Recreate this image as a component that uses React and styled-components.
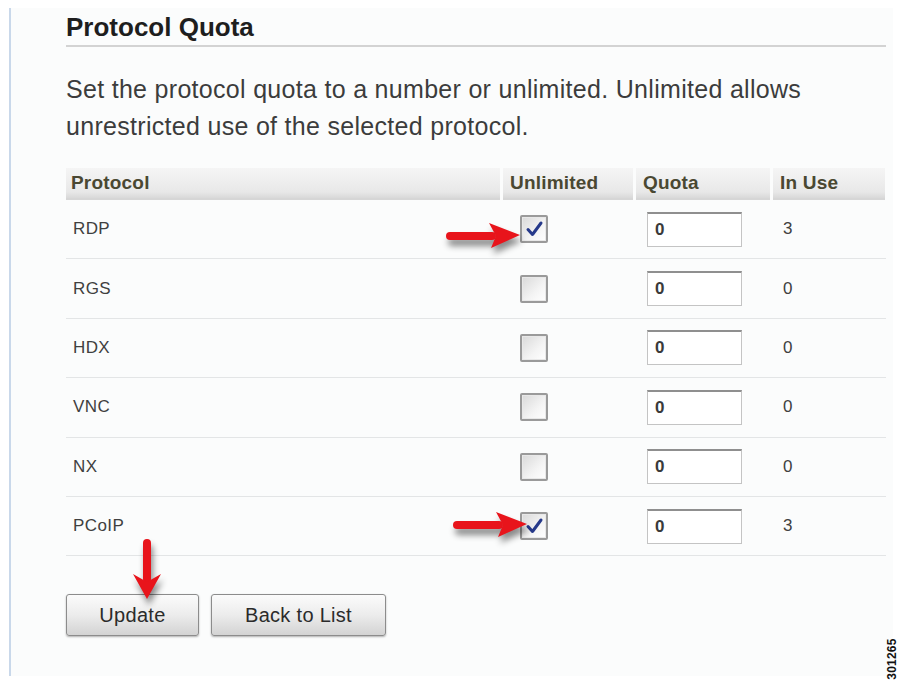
import React from "react";
import styled, { createGlobalStyle } from "styled-components";

const Global = createGlobalStyle`
  html, body { margin: 0; padding: 0; background: #ffffff; }
  body { font-family: "Liberation Sans", Arial, sans-serif; }
`;

const Page = styled.div`
  width: 900px;
  height: 689px;
  position: relative;
  overflow: hidden;
  padding-top: 8px;
  box-sizing: border-box;
`;

const Frame = styled.div`
  margin-left: 9px;
  width: 884px;
  height: 668px;
  box-sizing: border-box;
  border-left: 2px solid #c9d8ea;
  background: #fbfcfc;
  padding: 4px 0 0 55px;
  display: flex;
  flex-direction: column;
`;

const Content = styled.div`
  width: 820px;
  display: flex;
  flex-direction: column;
`;

const Title = styled.h2`
  margin: 0;
  font-size: 26px;
  line-height: 30px;
  font-weight: bold;
  color: #1e1e1e;
  padding-bottom: 3px;
  border-bottom: 2px solid #d3d3d3;
`;

const Description = styled.p`
  margin: 24px 0 0 0;
  font-size: 25px;
  line-height: 37px;
  letter-spacing: 0.3px;
  color: #3c3c3c;
`;

const Table = styled.div`
  margin-top: 23px;
  display: flex;
  flex-direction: column;
`;

const cols = "434px 130px 134px 112px";

const HeaderRow = styled.div`
  display: grid;
  grid-template-columns: ${cols};
  column-gap: 3px;
  height: 32px;
`;

const HeaderCell = styled.div`
  display: flex;
  align-items: center;
  padding-left: ${(p) => p.$pad || 6}px;
  background: linear-gradient(#f5f5f5, #e8e8e8 80%, #d9d9d9);
  border-bottom: 2px solid #d6d6d6;
  font-size: 19px;
  font-weight: bold;
  letter-spacing: 0.2px;
  color: #4a4832;
`;

const Row = styled.div`
  display: grid;
  grid-template-columns: ${cols};
  column-gap: 3px;
  height: 59.4px;
  box-sizing: border-box;
  border-bottom: 1px solid #e3e5e6;
`;

const Cell = styled.div`
  position: relative;
  display: flex;
  align-items: center;
  padding-left: ${(p) => p.$pad || 0}px;
  font-size: 17px;
  letter-spacing: 0.4px;
  color: #404040;
`;

const Box = styled.span`
  width: 28px;
  height: 28px;
  box-sizing: border-box;
  border: 2px solid #9a9a9a;
  border-radius: 2px;
  background: linear-gradient(135deg, #d9d9d9, #f4f4f4 60%, #ffffff);
  box-shadow: inset 0 0 0 1px #e8e8e8;
  display: flex;
  align-items: center;
  justify-content: center;
`;

const QuotaInput = styled.input`
  width: 95px;
  height: 35px;
  box-sizing: border-box;
  border: 1px solid #c4c4c4;
  border-top: 2px solid #8f8f8f;
  background: #ffffff;
  font-family: "Liberation Sans", Arial, sans-serif;
  font-size: 17px;
  font-weight: bold;
  color: #3a3a3a;
  padding: 0 0 0 7px;
  outline: none;
`;

const ArrowSvg = styled.svg`
  position: absolute;
  left: ${(p) => p.$left}px;
  top: ${(p) => p.$top}px;
  filter: drop-shadow(2px 6px 3px rgba(0, 0, 0, 0.45));
  z-index: 2;
  pointer-events: none;
`;

const ButtonRow = styled.div`
  position: relative;
  margin-top: 38px;
  display: flex;
  gap: 12px;
`;

const Button = styled.button`
  height: 42px;
  width: ${(p) => p.$w}px;
  box-sizing: border-box;
  border: 1px solid #8c8c8c;
  border-radius: 3px;
  background: linear-gradient(#fbfbfb, #ececec 50%, #d3d3d3);
  box-shadow: 0 1px 2px rgba(0, 0, 0, 0.3);
  font-family: "Liberation Sans", Arial, sans-serif;
  font-size: 20px;
  letter-spacing: 0.3px;
  color: #2b2b2b;
  padding: 0;
`;

const Stamp = styled.div`
  position: absolute;
  left: 871px;
  top: 652px;
  transform: rotate(-90deg);
  font-size: 12px;
  font-weight: bold;
  color: #111;
  letter-spacing: 0.2px;
`;

function Checkbox({ checked }) {
  return (
    <Box>
      {checked && (
        <svg width="22" height="22" viewBox="0 0 22 22">
          <path d="M5 11.5 L9.5 16.5 L18 5" fill="none" stroke="#26398a" strokeWidth="3" strokeLinecap="round" strokeLinejoin="round" />
        </svg>
      )}
    </Box>
  );
}

function RightArrow({ left, top }) {
  return (
    <ArrowSvg $left={left} $top={top} width="82" height="32" viewBox="0 0 82 32">
      <rect x="5" y="12" width="50" height="8" rx="4" fill="#e8141b" />
      <polygon points="48,3 79,15 50,28 55,16" fill="#e8141b" />
    </ArrowSvg>
  );
}

function DownArrow({ left, top }) {
  return (
    <ArrowSvg $left={left} $top={top} width="30" height="64" viewBox="0 0 30 64">
      <rect x="11" y="2" width="8" height="44" rx="4" fill="#e8141b" />
      <polygon points="1,37 15,62 29,37 15,45" fill="#e8141b" />
    </ArrowSvg>
  );
}

const rows = [
  { name: "RDP", checked: true, inUse: "3", arrow: { left: -62, top: 20 } },
  { name: "RGS", checked: false, inUse: "0" },
  { name: "HDX", checked: false, inUse: "0" },
  { name: "VNC", checked: false, inUse: "0" },
  { name: "NX", checked: false, inUse: "0" },
  { name: "PCoIP", checked: true, inUse: "3", arrow: { left: -55, top: 12 } },
];

export default function App() {
  return (
    <>
      <Global />
      <Page>
        <Frame>
          <Content>
            <Title>Protocol Quota</Title>
            <Description>
              Set the protocol quota to a number or unlimited. Unlimited allows
              <br />
              unrestricted use of the selected protocol.
            </Description>
            <Table>
              <HeaderRow>
                <HeaderCell $pad={5}>Protocol</HeaderCell>
                <HeaderCell $pad={7}>Unlimited</HeaderCell>
                <HeaderCell $pad={7}>Quota</HeaderCell>
                <HeaderCell $pad={7}>In Use</HeaderCell>
              </HeaderRow>
              {rows.map((r) => (
                <Row key={r.name}>
                  <Cell $pad={7}>{r.name}</Cell>
                  <Cell $pad={17}>
                    <Checkbox checked={r.checked} />
                    {r.arrow && <RightArrow left={r.arrow.left} top={r.arrow.top} />}
                  </Cell>
                  <Cell $pad={11}>
                    <QuotaInput defaultValue="0" readOnly />
                  </Cell>
                  <Cell $pad={10}>{r.inUse}</Cell>
                </Row>
              ))}
            </Table>
            <ButtonRow>
              <Button $w={133}>Update</Button>
              <Button $w={175}>Back to List</Button>
              <DownArrow left={66} top={-57} />
            </ButtonRow>
          </Content>
        </Frame>
        <Stamp>301265</Stamp>
      </Page>
    </>
  );
}
